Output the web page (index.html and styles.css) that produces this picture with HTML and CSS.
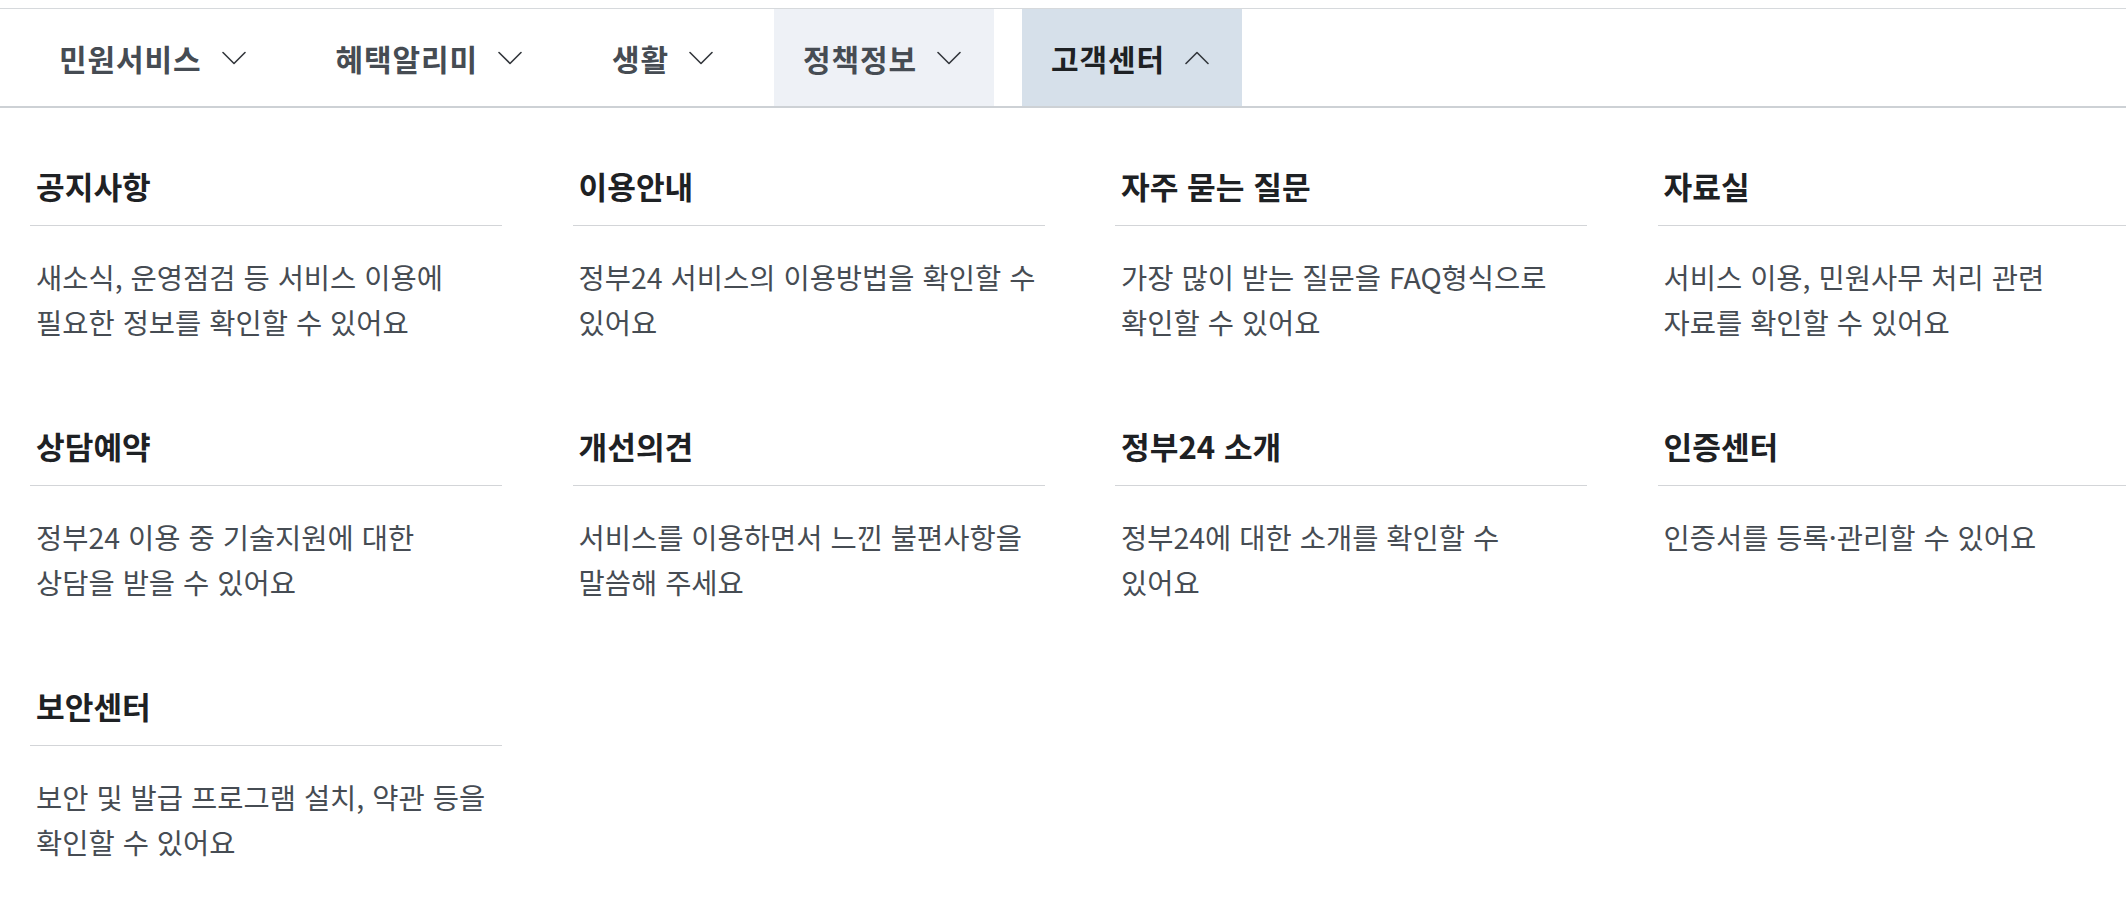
FILE: index.html
```html
<!DOCTYPE html>
<html lang="ko">
<head>
<meta charset="utf-8">
<title>정부24 고객센터 메뉴</title>
<link rel="stylesheet" href="styles.css">
</head>
<body>
<div class="page">
  <nav class="gnb">
    <ul class="gnb-list">
      <li class="gnb-item">
        <span class="gnb-label">민원서비스</span>
        <svg class="chev" viewBox="0 0 24 24" width="24" height="24"><path d="M1 6.5 12 17.5 23 6.5"/></svg>
      </li>
      <li class="gnb-item">
        <span class="gnb-label">혜택알리미</span>
        <svg class="chev" viewBox="0 0 24 24" width="24" height="24"><path d="M1 6.5 12 17.5 23 6.5"/></svg>
      </li>
      <li class="gnb-item">
        <span class="gnb-label">생활</span>
        <svg class="chev" viewBox="0 0 24 24" width="24" height="24"><path d="M1 6.5 12 17.5 23 6.5"/></svg>
      </li>
      <li class="gnb-item is-hover">
        <span class="gnb-label">정책정보</span>
        <svg class="chev" viewBox="0 0 24 24" width="24" height="24"><path d="M1 6.5 12 17.5 23 6.5"/></svg>
      </li>
      <li class="gnb-item is-active">
        <span class="gnb-label">고객센터</span>
        <svg class="chev up" viewBox="0 0 24 24" width="24" height="24"><path d="M1 17.5 12 6.5 23 17.5"/></svg>
      </li>
    </ul>
  </nav>

  <section class="submenu">
    <div class="sub-grid">
      <div class="sub-item">
        <h3 class="sub-title">공지사항</h3>
        <p class="sub-desc">새소식, 운영점검 등 서비스 이용에<br>필요한 정보를 확인할 수 있어요</p>
      </div>
      <div class="sub-item">
        <h3 class="sub-title">이용안내</h3>
        <p class="sub-desc">정부24 서비스의 이용방법을 확인할 수 있어요</p>
      </div>
      <div class="sub-item">
        <h3 class="sub-title">자주 묻는 질문</h3>
        <p class="sub-desc">가장 많이 받는 질문을 FAQ형식으로<br>확인할 수 있어요</p>
      </div>
      <div class="sub-item">
        <h3 class="sub-title">자료실</h3>
        <p class="sub-desc">서비스 이용, 민원사무 처리 관련<br>자료를 확인할 수 있어요</p>
      </div>
      <div class="sub-item">
        <h3 class="sub-title">상담예약</h3>
        <p class="sub-desc">정부24 이용 중 기술지원에 대한<br>상담을 받을 수 있어요</p>
      </div>
      <div class="sub-item">
        <h3 class="sub-title">개선의견</h3>
        <p class="sub-desc">서비스를 이용하면서 느낀 불편사항을<br>말씀해 주세요</p>
      </div>
      <div class="sub-item">
        <h3 class="sub-title">정부24 소개</h3>
        <p class="sub-desc">정부24에 대한 소개를 확인할 수<br>있어요</p>
      </div>
      <div class="sub-item">
        <h3 class="sub-title">인증센터</h3>
        <p class="sub-desc">인증서를 등록·관리할 수 있어요</p>
      </div>
      <div class="sub-item">
        <h3 class="sub-title">보안센터</h3>
        <p class="sub-desc">보안 및 발급 프로그램 설치, 약관 등을<br>확인할 수 있어요</p>
      </div>
    </div>
  </section>
</div>
</body>
</html>
```

FILE: styles.css
```css
html, body {
  margin: 0;
  padding: 0;
  background: #ffffff;
  overflow-x: hidden;
}

body {
  font-family: "Noto Sans CJK KR", "Noto Sans", sans-serif;
  color: #1e2124;
}

.page {
  padding-top: 8px;
}

.gnb {
  border-top: 1px solid #d6d9dc;
  border-bottom: 2px solid #cdd1d5;
}

.gnb-list {
  list-style: none;
  margin: 0;
  padding: 0 0 0 30px;
  display: flex;
  gap: 28px;
}

.gnb-item {
  display: flex;
  align-items: center;
  gap: 20px;
  height: 97px;
  padding: 0 33px 0 29px;
  font-size: 30px;
  font-weight: 700;
  letter-spacing: 0.9px;
  color: #464c53;
}

.gnb-label {
  line-height: 40px;
}

.gnb-item.is-hover {
  background: #eef1f6;
}

.gnb-item.is-active {
  background: #d6e0ea;
  color: #1e2124;
}

.chev {
  display: block;
  flex: none;
}

.chev path {
  fill: none;
  stroke: #33373c;
  stroke-width: 1.6;
  stroke-linecap: round;
  stroke-linejoin: round;
}

.submenu {
  padding: 58px 0 40px 30px;
}

.sub-grid {
  display: grid;
  grid-template-columns: repeat(4, 472px);
  column-gap: 70.5px;
  row-gap: 82px;
}

.sub-title {
  margin: 0;
  padding: 0 6px 19px;
  border-bottom: 1px solid #d3d5d8;
  font-size: 31.2px;
  line-height: 40px;
  font-weight: 700;
  color: #1e2124;
}

.sub-desc {
  margin: 0;
  padding: 28px 6px 0;
  font-size: 28.5px;
  line-height: 45px;
  font-weight: 400;
  color: #464c53;
}
```
